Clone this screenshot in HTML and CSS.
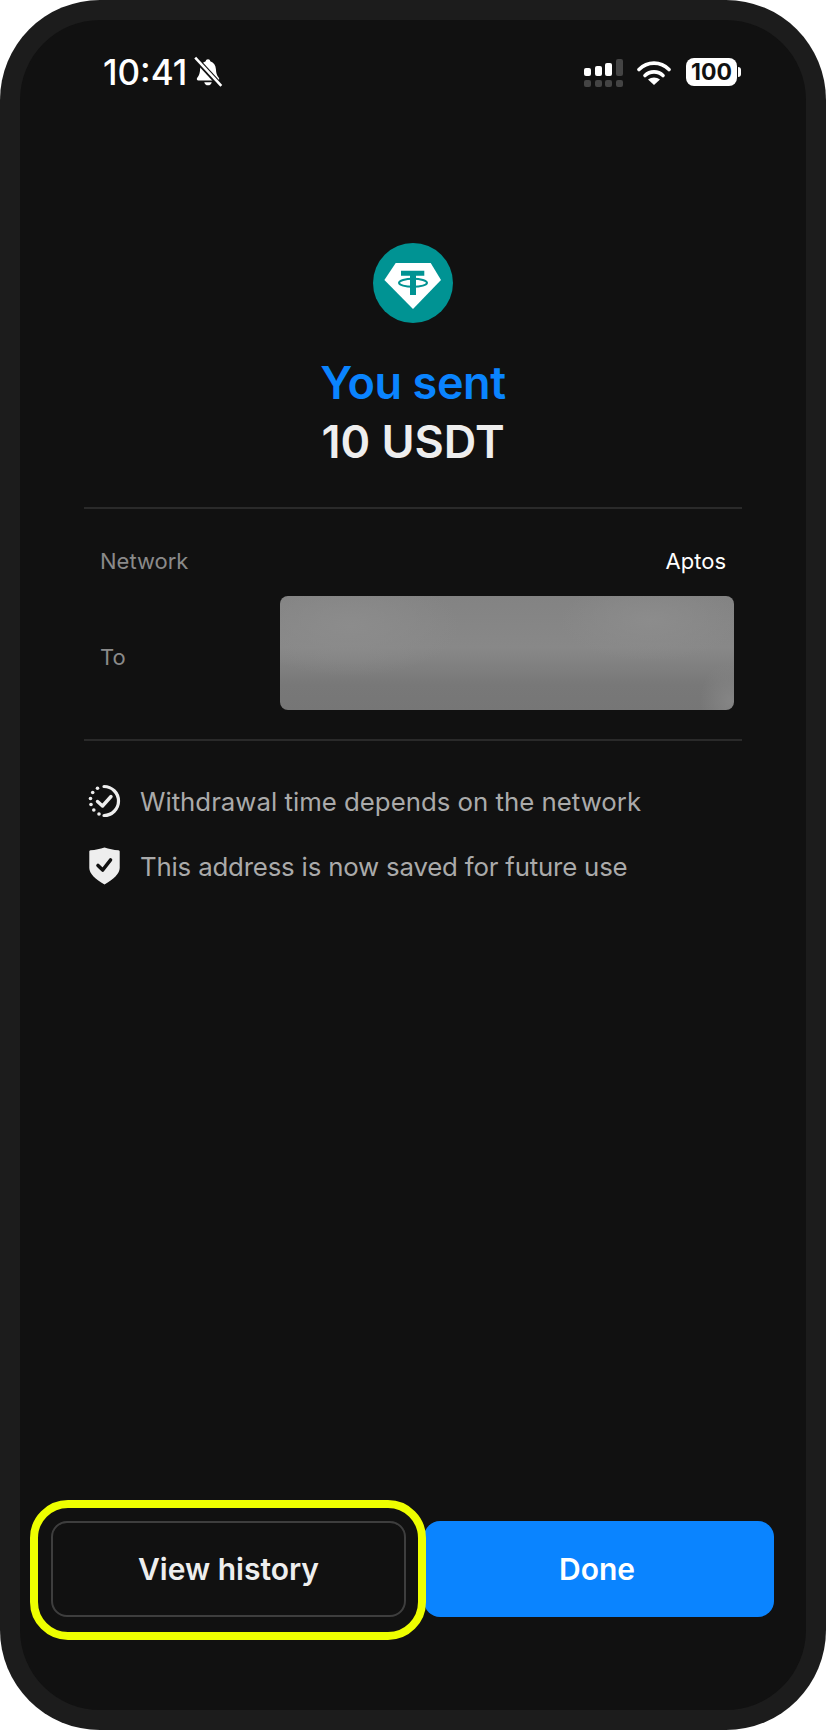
FILE: index.html
```html
<!DOCTYPE html>
<html lang="en">
<head>
<meta charset="utf-8">
<title>You sent</title>
<link rel="stylesheet" href="styles.css">
</head>
<body>
<div class="phone">
  <div class="screen">
    <div class="status">
      <div class="status-left">
        <span class="time">10:41</span>
        <svg class="bell" width="30" height="32" viewBox="0 0 28 30">
          <path fill="#fff" d="M14 3c-1.300 0-2 .8-2.100 1.900C8.500 6 6.800 8.800 6.600 12.200c-.2 3.600-.8 6-2.700 8.300-.9 1.100-.3 2.500 1.100 2.500h18c1.400 0 2-1.400 1.100-2.500-1.900-2.300-2.500-4.700-2.700-8.300-.2-3.400-1.900-6.200-5.300-7.300C16 3.800 15.300 3 14 3z"/>
          <path fill="#fff" d="M10.500 24.500h7c-.3 1.800-1.800 3-3.500 3s-3.200-1.200-3.500-3z"/>
          <path stroke="#111" stroke-width="5" d="M2 2l24 26"/>
          <path stroke="#fff" stroke-width="2.400" d="M2 1.500l24.500 26.500"/>
        </svg>
      </div>
      <div class="status-right">
        <div class="signal">
          <i class="bar b1"></i><i class="bar b2"></i><i class="bar b3"></i><i class="bar b4 dim"></i>
          <i class="dot"></i><i class="dot"></i><i class="dot"></i><i class="dot"></i>
        </div>
        <svg class="wifi" width="34" height="25" viewBox="0 0 34 25">
          <path fill="none" stroke="#fff" stroke-width="3.600" stroke-linecap="round" d="M2 9.500C10.500 1 23.500 1 32 9.500"/>
          <path fill="none" stroke="#fff" stroke-width="3.600" stroke-linecap="round" d="M8 15.500c5-4.800 13-4.800 18 0"/>
          <path fill="#fff" d="M17 25l-6-5.500c3.500-2.800 8.500-2.800 12 0z"/>
        </svg>
        <div class="battery">
          <span class="battery-body">100</span>
          <i class="battery-tip"></i>
        </div>
      </div>
    </div>

    <div class="hero">
      <svg class="token" width="80" height="80" viewBox="0 0 80 80">
        <circle cx="40" cy="40" r="40" fill="#009393"/>
        <path fill="#fff" d="M22.700 20h35l10.300 17-28 29-28.600-29z"/>
        <path fill="#009393" d="M28 27.700h23.300v5H43V52h-6V32.700h-9z"/>
        <ellipse cx="40" cy="39.800" rx="14" ry="4" fill="none" stroke="#009393" stroke-width="2"/>
      </svg>
      <h1 class="title"><span class="title-accent">You sent</span><span>10 USDT</span></h1>
    </div>

    <div class="details">
      <div class="row row-network">
        <span class="label">Network</span>
        <span class="value">Aptos</span>
      </div>
      <div class="row row-to">
        <span class="label label-to">To</span>
        <div class="redacted"></div>
      </div>
    </div>

    <ul class="notes">
      <li class="note">
        <svg width="34" height="36" viewBox="0 0 34 36">
          <path fill="none" stroke="#eee" stroke-width="3.200" stroke-linecap="round" d="M16 3.500a14.500 14.500 0 1 1 0 29"/>
          <g fill="#eee"><circle cx="9.500" cy="5.200" r="1.800"/><circle cx="4.700" cy="9.500" r="1.800"/><circle cx="2.500" cy="15.500" r="1.800"/><circle cx="3" cy="21.500" r="1.800"/><circle cx="5.800" cy="27" r="1.800"/><circle cx="11" cy="31" r="1.800"/></g>
          <path fill="none" stroke="#eee" stroke-width="3.400" stroke-linecap="round" stroke-linejoin="round" d="M9.500 18.500l5 4.500 8.500-9.500"/>
        </svg>
        <span>Withdrawal time depends on the network</span>
      </li>
      <li class="note note-tight">
        <svg width="34" height="38" viewBox="0 0 34 38">
          <path fill="#eee" d="M16.500 .5c4.500 1.500 9 2.400 14 2.800.8.100 1.200.5 1.200 1.300v16.400c0 5.600-6.200 11.500-15.200 16.500C7.500 32.500 1.300 26.600 1.300 21V4.600c0-.8.400-1.200 1.200-1.300 5-.4 9.500-1.300 14-2.800z"/>
          <path fill="none" stroke="#111" stroke-width="3.600" stroke-linecap="round" stroke-linejoin="round" d="M10 18.500l4.700 4.500 7.800-10"/>
        </svg>
        <span>This address is now saved for future use</span>
      </li>
    </ul>

    <div class="actions">
      <div class="btn btn-outline">View history<div class="highlight"></div></div>
      <div class="btn btn-primary">Done</div>
    </div>
  </div>
</div>
</body>
</html>
```

FILE: styles.css
```css
* { box-sizing: border-box; }
html, body { margin: 0; padding: 0; background: #fff; }
body { font-family: Inter, "Liberation Sans", sans-serif; }

.phone {
  width: 826px;
  height: 1730px;
  background: #1c1c1c;
  border-radius: 100px;
  padding: 20px;
}
.screen {
  height: 100%;
  background: #111;
  border-radius: 80px;
  display: flex;
  flex-direction: column;
}

.status {
  height: 44px;
  margin-top: 30px;
  padding: 0 65px 0 83px;
  display: flex;
  justify-content: space-between;
  align-items: center;
}
.status-left { display: flex; align-items: center; gap: 6px; }
.time { font-size: 35px; font-weight: 500; color: #fff; line-height: 44px; }
.status-right { display: flex; align-items: center; }

.signal {
  display: grid;
  grid-template-columns: repeat(4, 7px);
  grid-template-rows: 17px 7px;
  column-gap: 3.700px;
  row-gap: 4px;
  align-items: end;
  margin-right: 14px;
  margin-top: 2px;
}
.bar { display: block; background: #fff; border-radius: 2px; }
.b1 { height: 8px; }
.b2 { height: 10px; }
.b3 { height: 13px; }
.b4 { height: 17px; }
.dim, .dot { background: #444; }
.dot { display: block; height: 7px; border-radius: 2px; }

.wifi { margin-right: 15px; }

.battery { display: flex; align-items: center; }
.battery-body {
  width: 51px;
  height: 28px;
  background: #fff;
  border-radius: 8px;
  color: #111;
  font-size: 23px;
  font-weight: 700;
  line-height: 28px;
  text-align: center;
}
.battery-tip {
  display: block;
  width: 3px;
  height: 10px;
  margin-left: 1px;
  background: #fff;
  border-radius: 0 3px 3px 0;
}

.hero {
  margin-top: 149px;
  display: flex;
  flex-direction: column;
  align-items: center;
}
.token { display: block; }
.title {
  margin: 30px 0 0;
  font-size: 45px;
  font-weight: 600;
  line-height: 59px;
  color: #eee;
  text-align: center;
  display: flex;
  flex-direction: column;
}
.title-accent { color: #0a84ff; letter-spacing: -0.4px; }

.details {
  margin: 36px 64px 0;
  border-top: 2px solid #2a2a2a;
  border-bottom: 2px solid #2a2a2a;
  padding: 32px 8px 29px 16px;
}
.row { display: flex; justify-content: space-between; align-items: center; }
.row-network { height: 40px; padding-right: 8px; }
.row-to { margin-top: 15px; }
.label { font-size: 22px; color: #8a8a8a; }
.label-to { padding-top: 7px; }
.value { font-size: 22px; color: #fff; }
.redacted {
  width: 454px;
  height: 114px;
  border-radius: 8px;
  background:
    radial-gradient(ellipse 110px 50px at 70px 30px, #8c8c8c, transparent),
    radial-gradient(ellipse 90px 40px at 370px 25px, #8c8c8c, transparent),
    radial-gradient(ellipse 30px 40px at 450px 105px, #858585, transparent),
    linear-gradient(to bottom, #838383 0, #888 45%, #787878 78%, #767676 100%);
}

.notes {
  list-style: none;
  margin: 42px 0 0 68px;
  padding: 0;
  display: flex;
  flex-direction: column;
  gap: 29px;
}
.note {
  display: flex;
  align-items: center;
  gap: 18px;
  height: 36px;
  font-size: 25.800px;
  color: #aaa;
}
.note-tight { letter-spacing: -0.18px; }
.note svg { flex: none; width: 34px; }

.actions {
  margin-top: auto;
  padding: 0 32px 93px 31px;
  display: flex;
  gap: 18px;
}
.btn {
  height: 96px;
  border-radius: 16px;
  display: flex;
  align-items: center;
  justify-content: center;
  font-size: 30px;
  font-weight: 600;
}
.btn-outline {
  width: 355px;
  position: relative;
  border: 2px solid #3e3e3e;
  color: #eee;
}
.btn-primary {
  width: 350px;
  padding-right: 4px;
  background: #0a84ff;
  color: #fff;
}
.highlight {
  position: absolute;
  left: -23px;
  right: -22px;
  top: -23px;
  bottom: -25px;
  border: 8px solid #eeff00;
  border-radius: 38px;
  z-index: 1;
}
```
